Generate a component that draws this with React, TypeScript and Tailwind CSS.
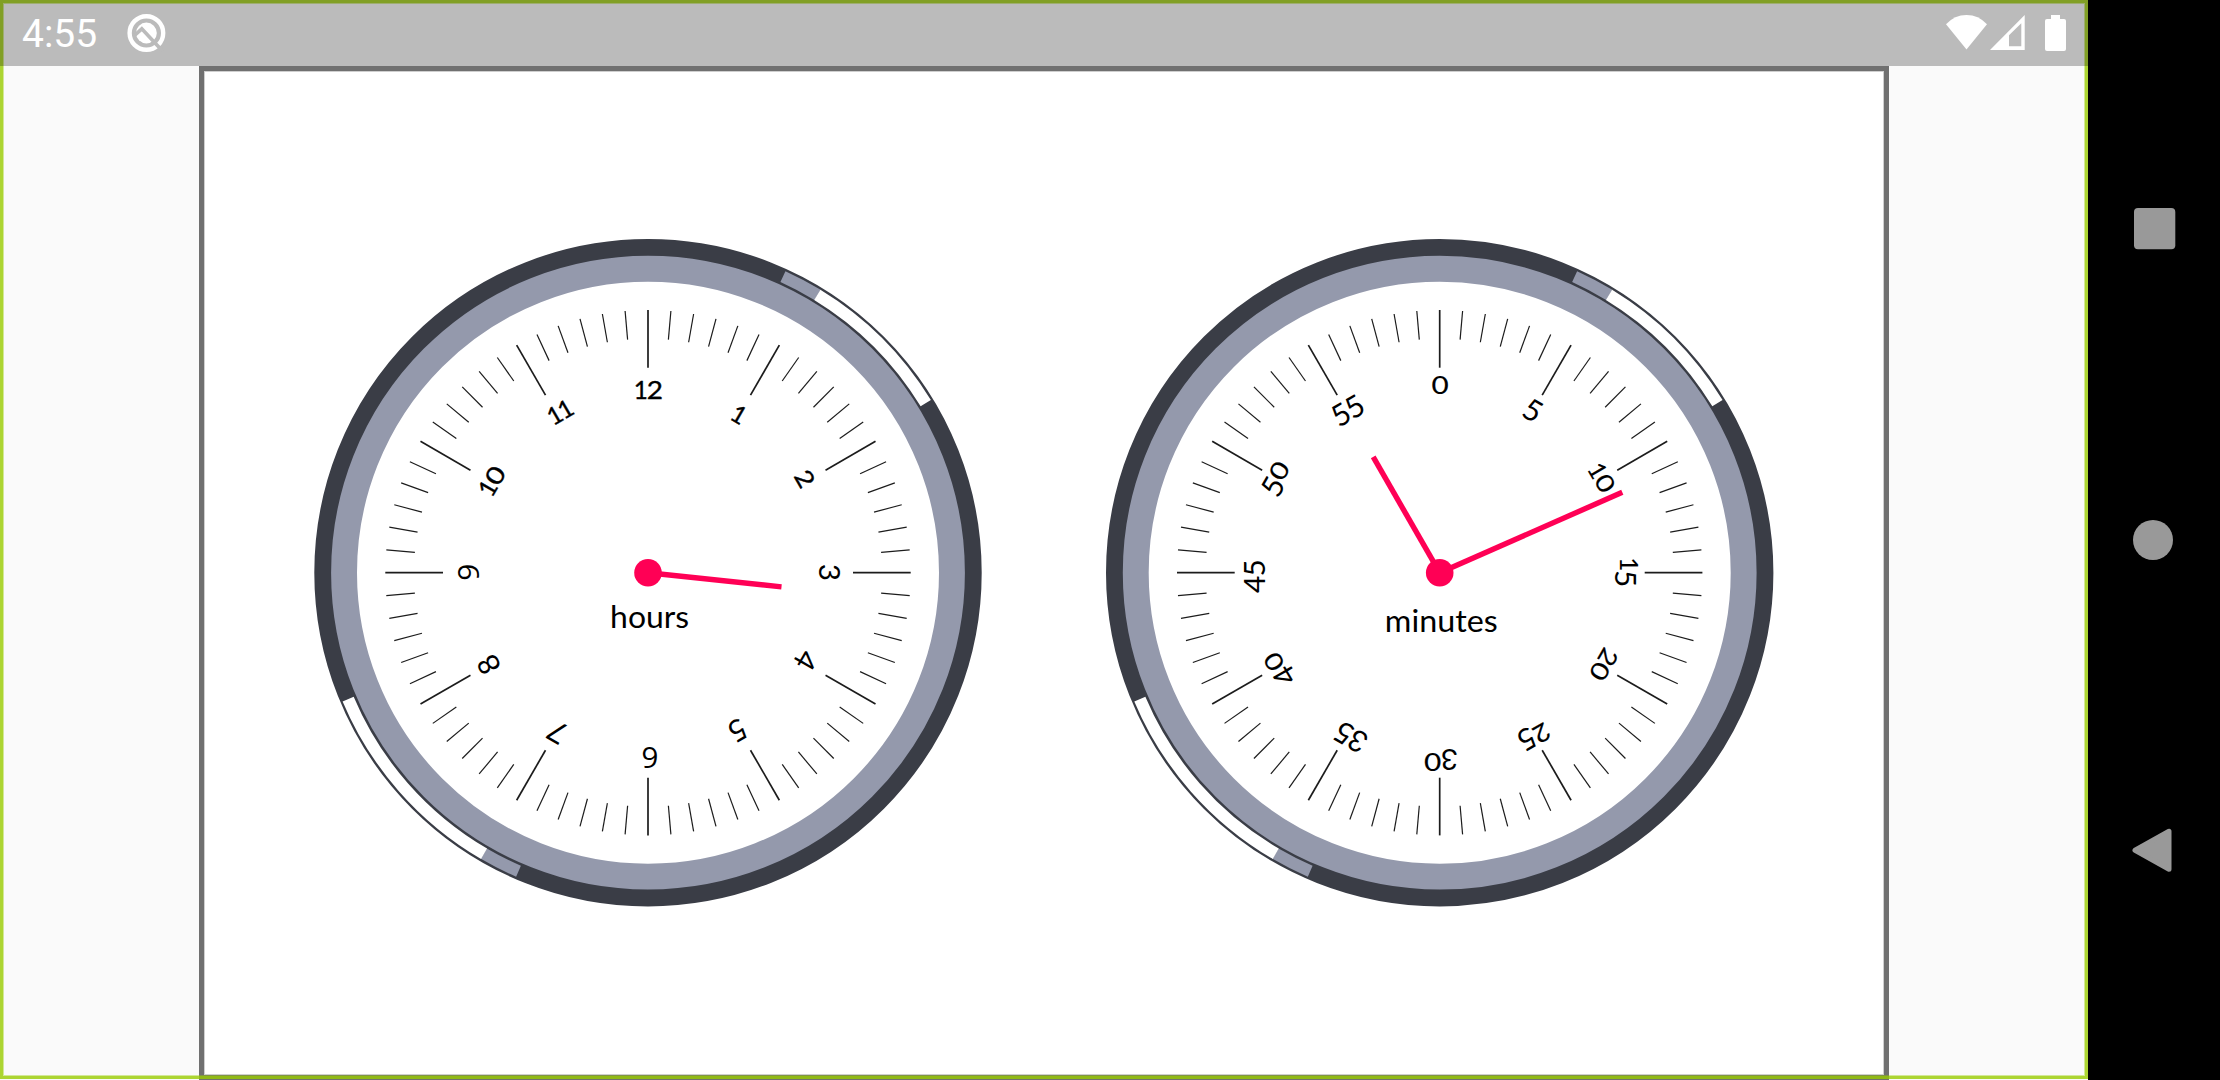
import React from "react";

type Label = { t: string; a: number; x: number; y: number };

const HOURS: Label[] = [
  { t: "12", a: 0, x: 0.5, y: -183 },
  { t: "1", a: 30, x: 91, y: -158.4 },
  { t: "2", a: 60, x: 157, y: -94 },
  { t: "3", a: 90, x: 181.3, y: -0.4 },
  { t: "4", a: 120, x: 157.7, y: 87.6 },
  { t: "5", a: 150, x: 89.7, y: 157.6 },
  { t: "6", a: 180, x: 2, y: 185.3 },
  { t: "7", a: 210, x: -90.7, y: 159.6 },
  { t: "8", a: 240, x: -159.3, y: 92 },
  { t: "9", a: 270, x: -180.3, y: -0.4 },
  { t: "10", a: 300, x: -156, y: -92 },
  { t: "11", a: 330, x: -88, y: -160.7 },
];

const MINUTES: Label[] = [
  { t: "0", a: 0, x: 0.3, y: -187.2 },
  { t: "5", a: 30, x: 93.3, y: -162.4 },
  { t: "10", a: 60, x: 162.3, y: -94.7 },
  { t: "15", a: 90, x: 186.6, y: -0.4 },
  { t: "20", a: 120, x: 164, y: 92 },
  { t: "25", a: 150, x: 94, y: 162.6 },
  { t: "30", a: 180, x: 1, y: 187.3 },
  { t: "35", a: 210, x: -89, y: 164.6 },
  { t: "40", a: 240, x: -159.7, y: 95.3 },
  { t: "45", a: 270, x: -185.9, y: 3.6 },
  { t: "50", a: 300, x: -162.7, y: -94 },
  { t: "55", a: 330, x: -92, y: -162.4 },
];

// Advance widths of the old-style numerals
const ADVANCE: Record<string, number> = {
  "0": 17.5, "1": 12.5, "2": 15.5, "3": 16, "4": 17, "5": 16, "6": 17, "7": 15, "8": 17, "9": 17,
};

const isSmall = (c: string) => c === "0" || c === "1" || c === "2";

// Numerals drawn with a curled stroke rather than a straight one
const isCurled = (c: string) => c === "6" || c === "9";

function Numeral({ label, bold }: { label: Label; bold: boolean }) {
  const chars = label.t.split("");
  const total = chars.reduce((s, c) => s + ADVANCE[c], 0);
  const mixed = chars.some((c) => !isSmall(c));
  let pen = -total / 2;
  return (
    <g transform={`translate(${label.x} ${label.y}) rotate(${label.a})`}>
      {chars.map((c, i) => {
        const x = pen + ADVANCE[c] / 2;
        pen += ADVANCE[c];
        const small = isSmall(c);
        const y = small ? (mixed ? 6.7 : 8.8) : 10.8;
        return (
          <text
            key={i}
            className={isCurled(c) ? "font-['Open_Sans',sans-serif]" : "font-['Lato',sans-serif]"}
            transform={`translate(${x} ${y}) scale(${c === "0" ? 1.22 : c === "1" ? 1 : small ? 1.15 : 1} 1)`}
            textAnchor="middle"
            fontSize={small ? 24.3 : 29.8}
            stroke="#000"
            strokeWidth={bold && small ? 0.35 : small ? 0.15 : 0}
          >
            {c}
          </text>
        );
      })}
    </g>
  );
}

function polar(r: number, deg: number) {
  const t = (deg * Math.PI) / 180;
  return `${(r * Math.sin(t)).toFixed(2)} ${(-r * Math.cos(t)).toFixed(2)}`;
}

function Arc({ from, to, color }: { from: number; to: number; color: string }) {
  return (
    <path
      d={`M${polar(325.4, from)}A325.4 325.4 0 0 1 ${polar(325.4, to)}`}
      fill="none"
      stroke={color}
      strokeWidth={12}
    />
  );
}

type Hand = { x: number; y: number };

function Clock(props: { viewBox: string; labels: Label[]; caption: string; captionY: number; captionWidth: number; hands: Hand[]; bold: boolean }) {
  const ticks = Array.from({ length: 72 }, (_, i) => i);
  return (
    <svg className="h-[670px] w-[670px] shrink-0 font-['Lato',sans-serif]" viewBox={props.viewBox}>
      <circle r={304.5} fill="none" stroke="#9499ac" strokeWidth={27} />
      <circle r={325.3} fill="none" stroke="#3a3d46" strokeWidth={16.8} />
      <Arc from={24.5} to={31.4} color="#9499ac" />
      <Arc from={31.35} to={58.6} color="#ffffff" />
      <Arc from={203.45} to={210.3} color="#9499ac" />
      <Arc from={210.25} to={247.15} color="#ffffff" />
      {ticks.map((i) => (
        <line
          key={i}
          y1={-262.7}
          y2={i % 6 === 0 ? -205 : -234}
          transform={`rotate(${i * 5})`}
          stroke="#1c1c1c"
          strokeWidth={i % 6 === 0 ? 1.7 : 1.2}
        />
      ))}
      {props.labels.map((l) => (
        <Numeral key={l.t} label={l} bold={props.bold} />
      ))}
      <text x={1.6} y={props.captionY} textAnchor="middle" fontSize={30} textLength={props.captionWidth} lengthAdjust="spacingAndGlyphs">
        {props.caption}
      </text>
      {props.hands.map((h, i) => (
        <line key={i} x2={h.x} y2={h.y} stroke="#ff0055" strokeWidth={5.4} />
      ))}
      <circle r={13.8} fill="#ff0055" />
    </svg>
  );
}

function StatusBar() {
  return (
    <header className="relative z-20 flex h-[66px] shrink-0 items-start bg-black/25 pl-[22px] pr-[22px] text-white">
      <span className="mt-[11px] w-[76px] font-['Roboto',sans-serif] text-[39px] leading-[46px]">4:55</span>
      <svg className="ml-[28px] mt-[13px] h-10 w-10" viewBox="0 0 40 40">
        <circle cx="20.4" cy="20" r="16.8" fill="none" stroke="#fff" strokeWidth="4.4" />
        <circle cx="20.4" cy="20" r="10.4" fill="#fff" />
        <path d="M8.5 22.5L15.8 15.8L36.5 38" fill="none" stroke="#bbbbbb" strokeWidth="3.6" />
      </svg>
      <div className="ml-auto flex items-start gap-[3px] pt-[15px]">
        <svg className="h-[35px] w-[41px]" viewBox="0 0 41 35">
          <path d="M0 9.3Q8.5 0 20.5 0T41 9.3L20.5 34.5Z" fill="#fff" />
        </svg>
        <svg className="h-[35px] w-[35px]" viewBox="0 0 35 35">
          <path d="M0 35L34.7 0V35ZM19 20.3V31.2H31.3V8.3Z" fill="#fff" fillRule="evenodd" />
        </svg>
        <svg className="ml-[17px] h-[36px] w-[21px]" viewBox="0 0 21 36">
          <rect y="4" width="21" height="32" rx="2" fill="#fff" />
          <rect x="6" width="9" height="6" fill="#fff" />
        </svg>
      </div>
    </header>
  );
}

function NavBar() {
  return (
    <nav className="flex w-[132px] shrink-0 flex-col items-center justify-between bg-black pb-[208px] pt-[206px]">
      <svg className="h-11 w-11" viewBox="0 0 44 44">
        <rect x="2" y="2" width="41.3" height="41.3" rx="4" fill="#999" />
      </svg>
      <svg className="h-11 w-11" viewBox="0 0 44 44">
        <circle cx="21" cy="23" r="20" fill="#999" />
      </svg>
      <svg className="h-11 w-11 overflow-visible" viewBox="0 0 44 44">
        <path d="M3 22.3L37 3.3V41.3Z" fill="#999" stroke="#999" strokeWidth="5" strokeLinejoin="round" />
      </svg>
    </nav>
  );
}

export default function App() {
  return (
    <div className="flex h-[1080px] w-[2220px] overflow-hidden bg-black">
      <div className="relative flex w-[2088px] shrink-0 flex-col bg-[#fafafa]">
        <div className="pointer-events-none absolute inset-x-0 bottom-px top-0 z-10 border-[3px] border-[#99cc00]/80">
          <div className="h-full w-full border border-[#99cc00]/40" />
        </div>
        <StatusBar />
        <main className="ml-[199px] h-[1014px] w-[1690px] border-[5px] border-[#707070] bg-white">
          <div className="flex h-full gap-[122px] border border-[#cfcfcf] pl-[108px] pt-[165px]">
            <Clock
              viewBox="-335 -335.7 670 670"
              labels={HOURS}
              caption="hours"
              captionY={55.8}
              captionWidth={79}
              hands={[{ x: 133.5, y: 14.2 }]}
              bold
            />
            <Clock
              viewBox="-334.7 -335.7 670 670"
              labels={MINUTES}
              caption="minutes"
              captionY={59.3}
              captionWidth={113}
              hands={[
                { x: -66.5, y: -115.8 },
                { x: 182.6, y: -80.4 },
              ]}
              bold={false}
            />
          </div>
        </main>
      </div>
      <NavBar />
    </div>
  );
}
